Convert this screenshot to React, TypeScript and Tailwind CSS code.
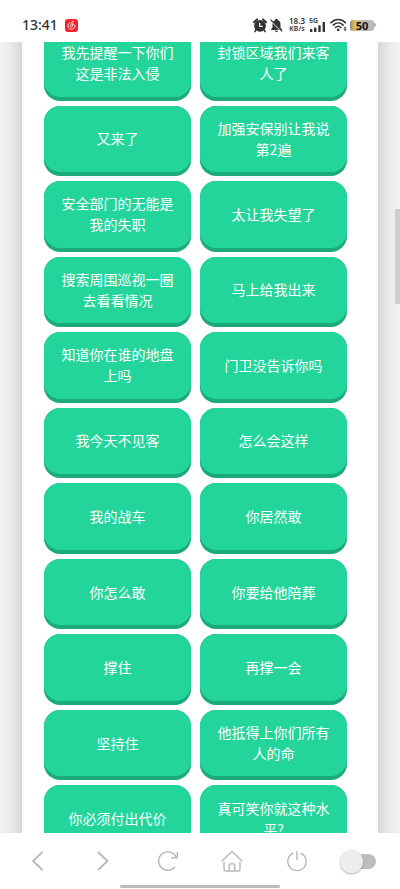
const phrases = [
  '我先提醒一下你们这是非法入侵',
  '封锁区域我们来客人了',
  '又来了',
  '加强安保别让我说第2遍',
  '安全部门的无能是我的失职',
  '太让我失望了',
  '搜索周围巡视一圈去看看情况',
  '马上给我出来',
  '知道你在谁的地盘上吗',
  '门卫没告诉你吗',
  '我今天不见客',
  '怎么会这样',
  '我的战车',
  '你居然敢',
  '你怎么敢',
  '你要给他陪葬',
  '撑住',
  '再撑一会',
  '坚持住',
  '他抵得上你们所有人的命',
  '你必须付出代价',
  '真可笑你就这种水平?',
];

function StatusBar() {
  return (
    <header className="flex h-[42px] shrink-0 items-center bg-white pt-2 pr-6 pl-[22px] text-[#303236]">
      <span className="font-['Noto_Sans'] text-sm leading-4 font-medium">13:41</span>
      <svg className="ml-[7px]" width="13" height="13" viewBox="0 0 13 13" fill="none" aria-hidden="true">
        <rect width="13" height="13" rx="3" fill="#f5222b" />
        <path
          d="M8.7 2.4C7.7 1.8 6.7 2.3 6.9 3.3L7.5 6.8C7.7 8.4 5.4 8.6 5.3 7.1C5.2 5.8 6.4 5 7.7 5.1C10.5 5.4 10.4 8.2 8.9 9.4C6.9 11 3.2 10.1 3 7.1C2.9 5.4 3.9 4.1 5.2 3.5"
          stroke="white"
          strokeWidth="0.9"
          strokeLinecap="round"
        />
      </svg>

      <div className="ml-auto flex items-center">
        {/* Alarm */}
        <svg width="14" height="15" viewBox="0 0 14 15" fill="none" aria-hidden="true">
          <path d="M1 4.2L4 1.4M10 1.4L13 4.2" stroke="#303236" strokeWidth="2" strokeLinecap="round" />
          <path d="M3.2 11.5L1.9 13.6M10.8 11.5L12.1 13.6" stroke="#303236" strokeWidth="1.5" strokeLinecap="round" />
          <circle cx="7" cy="7.9" r="5.9" fill="#303236" />
          <path d="M6.7 4.8V8.4H9.6" stroke="white" strokeWidth="1.2" />
        </svg>
        {/* Muted bell */}
        <svg className="ml-[3px]" width="13" height="15" viewBox="0 0 13 15" aria-hidden="true">
          <path
            d="M6.5 0.8C7.2 0.8 7.7 1.2 7.7 2C9.6 2.6 10.5 4.2 10.5 6.3V9.4L12 11.4V12H1V11.4L2.5 9.4V6.3C2.5 4.2 3.4 2.6 5.3 2C5.3 1.2 5.8 0.8 6.5 0.8ZM5 12.8H8C7.8 14.6 5.2 14.6 5 12.8Z"
            fill="#303236"
          />
          <path d="M0.5 2.2L12 13.6" stroke="white" strokeWidth="1.6" />
          <path d="M0.5 1.6L12.3 13.4" stroke="#303236" strokeWidth="1.2" />
        </svg>
        <div className="ml-[5px] flex w-[18px] flex-col items-center font-['Noto_Sans'] font-semibold whitespace-nowrap">
          <span className="text-[8px] leading-[8px]">18.3</span>
          <span className="text-[7px] leading-[8px]">KB/s</span>
        </div>
        {/* Signal */}
        <div className="ml-[3px] flex w-[17px] flex-col">
          <span className="font-['Noto_Sans'] text-[7px] leading-[6px] font-semibold">5G</span>
          <svg className="-mt-[2px]" width="17" height="10" viewBox="0 0 17 10" fill="#303236" aria-hidden="true">
            <rect x="1" y="7" width="2.4" height="3" rx="0.5" />
            <rect x="5" y="5.4" width="2.4" height="4.6" rx="0.5" />
            <rect x="9.3" y="3.2" width="2.4" height="6.8" rx="0.5" />
            <rect x="13.6" y="0" width="2.4" height="10" rx="0.5" />
          </svg>
        </div>
        {/* Wi-Fi */}
        <svg className="ml-[4px]" width="17" height="14" viewBox="0 0 17 14" fill="none" aria-hidden="true">
          <g stroke="#303236" strokeWidth="1.6" strokeLinecap="round">
            <path d="M1 4.6C5 0.4 11.4 0.4 15.4 4.6" />
            <path d="M3.3 7.1C6.2 4.2 10.2 4.2 13.1 7.1" />
            <path d="M5.5 9.5C7.1 8 9.3 8 10.9 9.5" />
          </g>
          <circle cx="8.2" cy="11.8" r="1.4" fill="#303236" />
          <path d="M15.1 8.8L16.3 10.3H13.9ZM15.1 13L13.9 11.5H16.3Z" stroke="#303236" strokeWidth="0.4" fill="#303236" />
        </svg>
        {/* Battery */}
        <div className="ml-[3px] flex h-[11px] w-[24px] items-center justify-center rounded-[3px] bg-linear-to-r from-[#8f8a7c] via-[#e6c052] via-20% to-[#b9b9bb] to-60% font-['Noto_Sans'] text-[11px] leading-[11px] font-bold text-[#111]">
          50
        </div>
        <span className="h-1 w-[2px] rounded-r-sm bg-[#a9a9ab]" />
      </div>
    </header>
  );
}

function PhraseButton({ text }: { text: string }) {
  return (
    <button
      type="button"
      className="flex items-center justify-center rounded-[16px] border-b-4 border-[#1aaa7c] bg-[#1aaa7c] text-sm leading-[21px] text-white"
    >
      <span className="flex h-full w-full items-center justify-center rounded-[16px] bg-[#23d59b] px-[14px]">
        {text}
      </span>
    </button>
  );
}

function BrowserBar() {
  return (
    <footer className="flex h-14 shrink-0 flex-col bg-white">
      <nav className="grid flex-1 grid-cols-6 items-center px-[6px] pt-1 text-[#b8b8b8]">
        <button type="button" aria-label="Back" className="flex justify-center">
          <svg width="22" height="22" viewBox="0 0 22 22" fill="none" stroke="currentColor" strokeWidth="1.8">
            <path d="M15.5 2L6 11L15.5 20" />
          </svg>
        </button>
        <button type="button" aria-label="Forward" className="flex justify-center">
          <svg width="22" height="22" viewBox="0 0 22 22" fill="none" stroke="currentColor" strokeWidth="1.8">
            <path d="M6 2L15.5 11L6 20" />
          </svg>
        </button>
        <button type="button" aria-label="Reload" className="flex justify-center">
          <svg width="22" height="22" viewBox="0 0 22 22" fill="none" stroke="currentColor" strokeWidth="1.4">
            <path d="M18 16.8A9.2 9.2 0 1 1 19.2 7.2M20.3 1.5V7.7H14" />
          </svg>
        </button>
        <button type="button" aria-label="Home" className="flex justify-center">
          <svg width="22" height="22" viewBox="0 0 22 22" fill="none" stroke="currentColor" strokeWidth="1.4">
            <path d="M0.6 11.3L11 1.4L21.4 11.3" />
            <path d="M3 11.5V19.5C3 20.6 3.5 21 4.5 21H17.5C18.5 21 19 20.6 19 19.5V11.5" />
            <path d="M8.2 21V15C8.2 14.2 8.5 13.9 9.3 13.9H12.7C13.5 13.9 13.8 14.2 13.8 15V21" />
          </svg>
        </button>
        <button type="button" aria-label="Power" className="flex justify-center">
          <svg width="22" height="22" viewBox="0 0 22 22" fill="none" stroke="currentColor" strokeWidth="1.4">
            <path d="M7.3 3A9.2 9.2 0 1 0 14.7 3M11 1V10" />
          </svg>
        </button>
        <label className="relative ml-[11px] flex h-[15px] w-9 items-center rounded-full bg-[#bdbdbd]">
          <input type="checkbox" role="switch" aria-label="Toggle" className="peer sr-only" />
          <span className="h-[23px] w-[23px] shrink-0 rounded-full bg-[#ededed] shadow-[0_1px_2px_rgba(0,0,0,0.3)] peer-checked:translate-x-[13px]" />
        </label>
      </nav>
      <div className="mx-auto mb-px h-[3px] w-2/5 rounded-full bg-[#bcbcbc]" />
    </footer>
  );
}

export default function App() {
  return (
    <div className="flex h-screen flex-col overflow-hidden bg-white font-['Noto_Sans_CJK_SC',sans-serif]">
      <StatusBar />

      <main className="relative min-h-0 flex-1 overflow-hidden bg-[#f1f2f0] px-[22px]">
        <div className="-my-8 h-[calc(100%+64px)] bg-white pt-5 shadow-[0_0_20px_rgba(0,0,0,0.22)]">
          {/* Scrolled list, its first and last rows run past the edges */}
          <div className="grid h-[calc(100%-9px)] auto-rows-fr grid-cols-2 gap-x-[9px] gap-y-[5px] pr-[31px] pl-[22px]">
            {phrases.map((text) => (
              <PhraseButton key={text} text={text} />
            ))}
          </div>
        </div>

        {/* Scroll thumb */}
        <div className="absolute top-[167px] right-0 h-[95px] w-[5px] bg-[#cdcdcd]" />
      </main>

      <BrowserBar />
    </div>
  );
}
